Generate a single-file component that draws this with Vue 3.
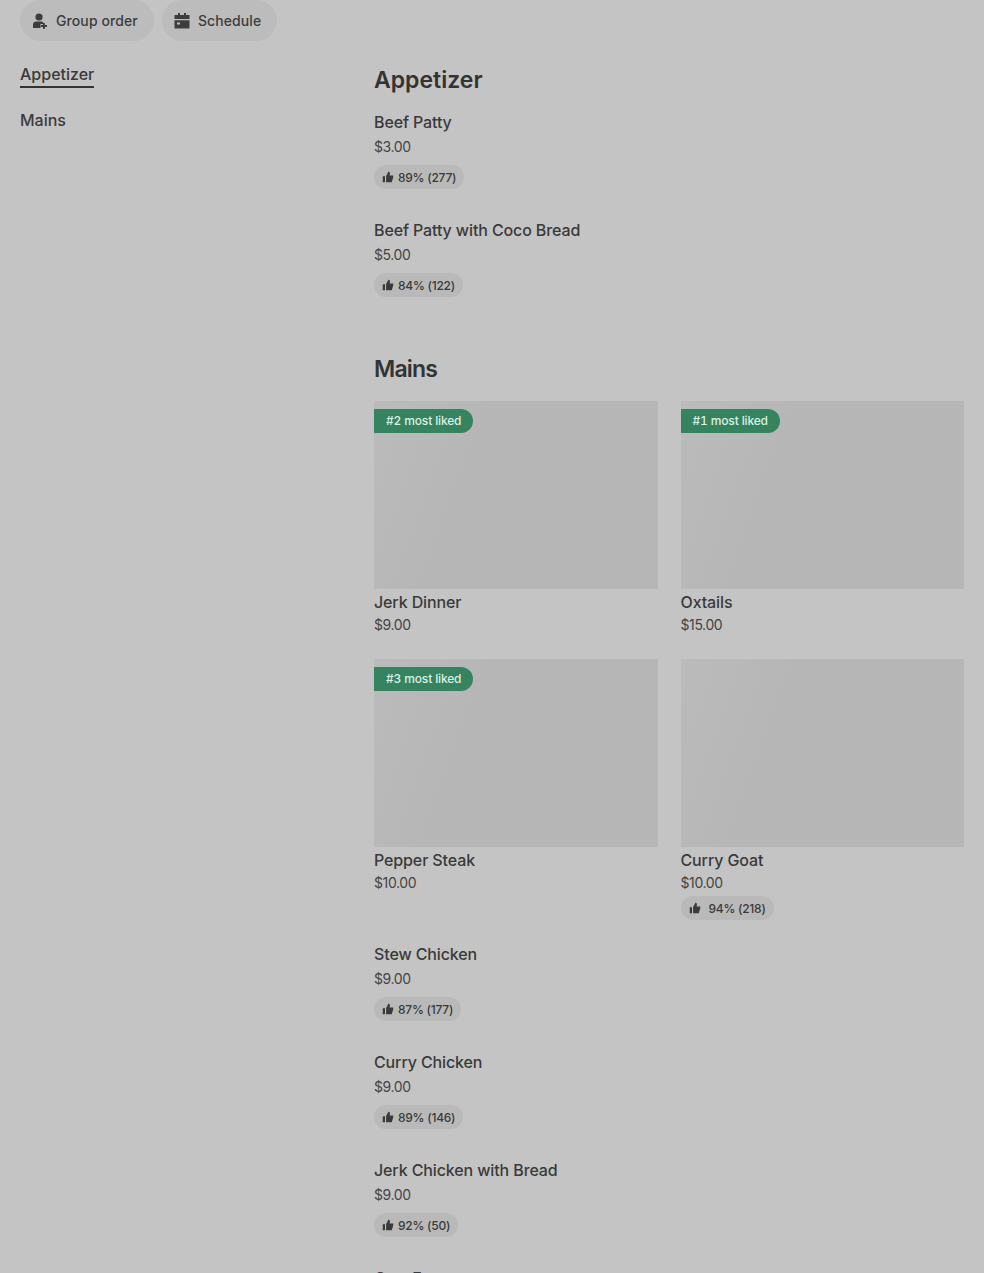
<script setup>
const appetizers = [
  { name: 'Beef Patty', price: '$3.00', rating: '89% (277)' },
  { name: 'Beef Patty with Coco Bread', price: '$5.00', rating: '84% (122)' }
]

const featured = [
  { name: 'Jerk Dinner', price: '$9.00', badge: '#2 most liked' },
  { name: 'Oxtails', price: '$15.00', badge: '#1 most liked' },
  { name: 'Pepper Steak', price: '$10.00', badge: '#3 most liked' },
  { name: 'Curry Goat', price: '$10.00', rating: '94% (218)' }
]

const mains = [
  { name: 'Stew Chicken', price: '$9.00', rating: '87% (177)' },
  { name: 'Curry Chicken', price: '$9.00', rating: '89% (146)' },
  { name: 'Jerk Chicken with Bread', price: '$9.00', rating: '92% (50)' },
  { name: 'Cow Foot', price: '$9.00', rating: '90% (40)' }
]

const thumbPath = 'M1 7h3v8H1zM5.5 15V6.8L8.6 1c1.2 0 2 .9 2 2.1L10.2 6H15v2.2L13 15z'
</script>

<template>
  <div class="page">
    <div class="actions">
      <button class="pill">
        <svg width="16" height="16" viewBox="0 0 16 16" fill="currentColor">
          <circle cx="7" cy="4" r="3.6" />
          <path d="M1 15v-3.2C1 9.8 2.6 8.6 4.4 8.6h5c.8 0 1.4.2 1.8.5V11H8.5v4z" />
          <path d="M11 10h1.8v2.1H15v1.8h-2.2V16H11v-2.1H9v-1.8h2z" />
        </svg>
        Group order
      </button>
      <button class="pill">
        <svg width="16" height="16" viewBox="0 0 16 16" fill="currentColor">
          <path d="M4 0h2v2h4V0h2v2h3.5v4H.5V2H4z" />
          <path d="M.5 7.2h15v8.3H.5zM3 9.5v2h3v-2z" fill-rule="evenodd" />
        </svg>
        Schedule
      </button>
    </div>

    <div class="content">
      <nav class="side">
        <a class="side-link active">Appetizer</a>
        <a class="side-link">Mains</a>
      </nav>

      <main class="menu">
        <section class="appetizers">
          <h2>Appetizer</h2>
          <div v-for="item in appetizers" :key="item.name" class="row">
            <div class="name">{{ item.name }}</div>
            <div class="price">{{ item.price }}</div>
            <span class="rating">
              <svg width="12" height="12" viewBox="0 0 16 16" fill="currentColor"><path :d="thumbPath" /></svg>
              {{ item.rating }}
            </span>
          </div>
        </section>

        <section class="mains">
          <h2>Mains</h2>
          <div class="grid">
            <div v-for="item in featured" :key="item.name" class="card">
              <div class="photo">
                <span v-if="item.badge" class="badge">{{ item.badge }}</span>
              </div>
              <div class="name">{{ item.name }}</div>
              <div class="price">{{ item.price }}</div>
              <span v-if="item.rating" class="rating wide">
                <svg width="12" height="12" viewBox="0 0 16 16" fill="currentColor"><path :d="thumbPath" /></svg>
                {{ item.rating }}
              </span>
            </div>
          </div>
          <div v-for="item in mains" :key="item.name" class="row">
            <div class="name">{{ item.name }}</div>
            <div class="price">{{ item.price }}</div>
            <span class="rating">
              <svg width="12" height="12" viewBox="0 0 16 16" fill="currentColor"><path :d="thumbPath" /></svg>
              {{ item.rating }}
            </span>
          </div>
        </section>
      </main>
    </div>
  </div>
</template>

<style>
html, body {
  margin: 0;
  background: #c4c4c4;
}
</style>

<style scoped>
.page {
  height: 100vh;
  overflow: hidden;
  box-sizing: border-box;
  background: #c4c4c4;
  color: #353535;
  font-family: Inter, "Liberation Sans", sans-serif;
  padding: 0 20px;
}

.actions {
  display: flex;
  gap: 8px;
}

.pill {
  display: flex;
  align-items: center;
  gap: 8px;
  height: 41px;
  padding: 0 16px 0 12px;
  border: none;
  border-radius: 21px;
  background: #bcbcbc;
  color: #3c3c3c;
  font: 500 14px Inter, "Liberation Sans", sans-serif;
  letter-spacing: 0.1px;
}

.content {
  display: flex;
}

.side {
  width: 354px;
  flex-shrink: 0;
  padding-top: 23px;
  display: flex;
  flex-direction: column;
  align-items: flex-start;
  gap: 22px;
}

.side-link {
  font-size: 16px;
  font-weight: 500;
  line-height: 20px;
  color: #3a3a3a;
}

.side-link.active {
  border-bottom: 2px solid #333;
  padding-bottom: 2px;
}

.menu {
  flex: 1;
  min-width: 0;
}

h2 {
  margin: 0;
  font-size: 23px;
  font-weight: 600;
  line-height: 32px;
  color: #333;
}

.appetizers {
  padding-top: 23px;
}

.appetizers h2 {
  margin-bottom: 16px;
}

.mains {
  padding-top: 25px;
}

.mains h2 {
  margin-bottom: 16px;
  letter-spacing: -0.8px;
}

.row {
  height: 108px;
}

.name {
  font-size: 16px;
  font-weight: 500;
  line-height: 20px;
  letter-spacing: -0.12px;
  color: #3a3a3a;
}

.row .price {
  margin-top: 5px;
}

.price {
  font-size: 14px;
  line-height: 20px;
  letter-spacing: -0.4px;
  color: #444;
}

.rating {
  display: inline-flex;
  align-items: center;
  gap: 4px;
  height: 24px;
  margin-top: 8px;
  padding: 0 8px;
  border-radius: 12px;
  background: #b9b9b9;
  font-size: 12px;
  font-weight: 500;
  letter-spacing: -0.25px;
  color: #3a3a3a;
}

.rating.wide {
  gap: 8px;
  margin-top: 3px;
}

.grid {
  display: grid;
  grid-template-columns: 1fr 1fr;
  column-gap: 23px;
  row-gap: 24px;
  margin-bottom: 24px;
}

.card .name {
  margin-top: 3px;
}

.card .price {
  margin-top: 3px;
}

.photo {
  height: 188px;
  padding-top: 8px;
  box-sizing: border-box;
  background: linear-gradient(110deg, #bbbbbb, #b6b6b6 35%);
}

.badge {
  display: inline-block;
  height: 24px;
  line-height: 24px;
  padding: 0 12px;
  border-radius: 0 12px 12px 0;
  background: #35845f;
  color: #dcefe5;
  font-size: 12px;
  font-weight: 500;
  font-variant-numeric: tabular-nums;
  letter-spacing: -0.15px;
}
</style>
